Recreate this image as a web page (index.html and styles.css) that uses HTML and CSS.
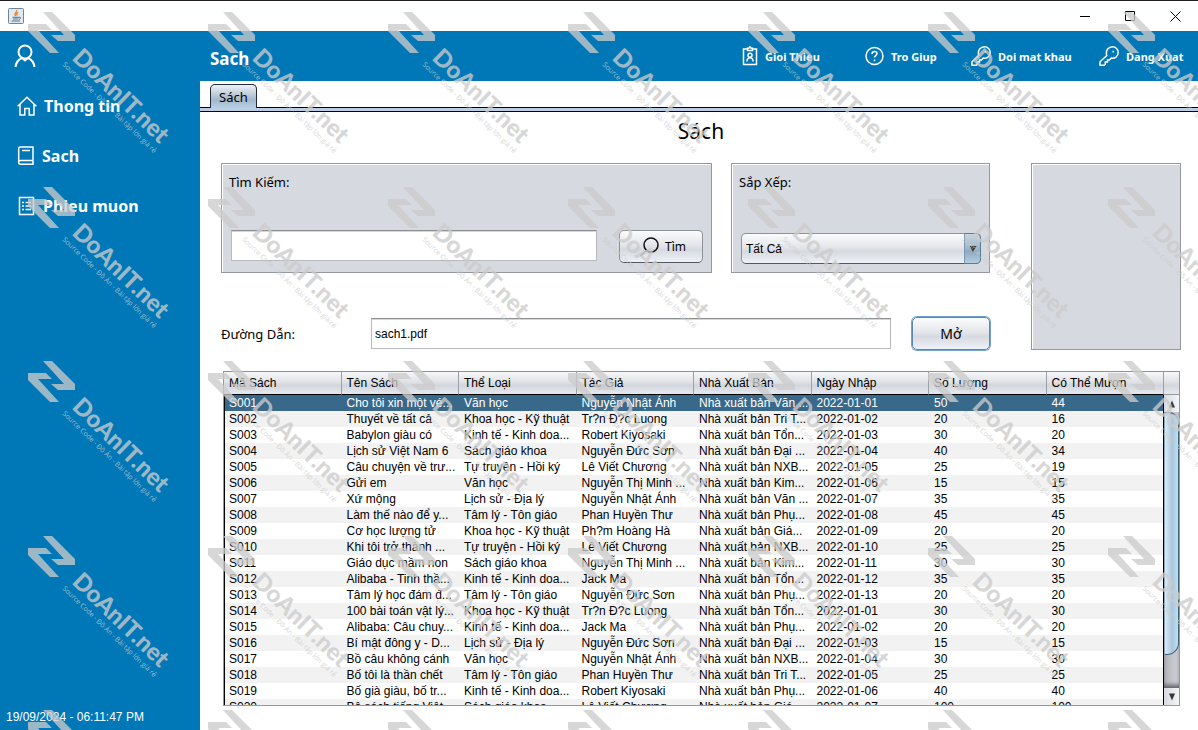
FILE: index.html
```html
<!DOCTYPE html>
<html lang="vi">
<head>
<meta charset="utf-8">
<title>Sach</title>
<link rel="stylesheet" href="styles.css">
</head>
<body>
<div class="window">
  <header class="titlebar">
    <svg class="app-icon" width="16" height="16" viewBox="0 0 16 16" aria-hidden="true">
      <rect x="0.5" y="0.5" width="15" height="15" rx="1" fill="#e3eaef" stroke="#6f8494"/>
      <path d="M8.6 2c1.4 1.7-3.4 3-.9 6.200M10.300 4.300c-2 1-2.200 2-.8 3.200" fill="none" stroke="#e8842a" stroke-width="1.300"/>
      <path d="M4.500 9.300h6.500M5 11h5.500M3.500 13h8.500M11 9.300c2.200-.6 2.200 1.500 0 2" fill="none" stroke="#4c7392"/>
    </svg>
    <div class="window-buttons">
      <button type="button" aria-label="Minimize"><svg width="11" height="11" viewBox="0 0 11 11"><path d="M0 5.500h10"/></svg></button>
      <button type="button" aria-label="Maximize"><svg width="11" height="11" viewBox="0 0 11 11"><path d="M.5.5h9v9h-9z"/></svg></button>
      <button type="button" aria-label="Close"><svg width="11" height="11" viewBox="0 0 11 11"><path d="M.5.5l10 10M10.500.5l-10 10"/></svg></button>
    </div>
  </header>
  <div class="body">
    <aside class="sidebar">
      <div class="user">
        <svg width="22" height="24" viewBox="0 0 22 24" aria-hidden="true"><circle cx="11" cy="8" r="6.500"/><path d="M1.500 23C2 18.500 4.500 15.500 8 14l3 2.500 3-2.500c3.500 1.500 6 4.500 6.500 9"/></svg>
      </div>
      <nav class="menu">
        <a href="#"><svg width="20" height="20" viewBox="0 0 20 20"><path d="M.7 10.300L10 1.200l9.300 9.100M3 8.500V19h4.800v-6.500h4.400V19H17V8.500"/></svg>Thong tin</a>
        <a href="#"><svg width="18" height="20" viewBox="0 0 18 20"><path d="M16 1H3.500C2.300 1 1.700 1.700 1.700 2.700v13.600c0 1.200.8 1.900 1.800 1.900H16zM1.700 16c0-1 .8-1.500 1.800-1.500H16M5 4.500h8"/></svg>Sach</a>
        <a href="#"><svg width="19" height="20" viewBox="0 0 19 20"><path d="M2.500 1.500h14v17h-14zM5 6.500h2M8.500 6.500H14M5 10h2M8.500 10H14M5 13.500h2M8.500 13.500H14"/></svg>Phieu muon</a>
      </nav>
      <time class="clock">19/09/2024 - 06:11:47 PM</time>
    </aside>
    <main class="main">
      <div class="topbar">
        <h1>Sach</h1>
        <nav class="actions">
          <a href="#"><svg width="16" height="20" viewBox="0 0 16 20"><path d="M5 3H1.500v15.500h13V3H11M5.500 4.500V2.200h1.300L8 .8l1.200 1.400h1.300v2.300z"/><circle cx="8" cy="9.200" r="2"/><path d="M5 15.500c0-5 6-5 6 0"/></svg>Gioi Thieu</a>
          <a href="#"><svg width="19" height="20" viewBox="0 0 19 20"><circle cx="9.500" cy="10" r="8.500"/><path d="M7 8c0-3.500 5-3.300 5-.4 0 2-2.500 2-2.500 4M9.500 13.500v1.700"/></svg>Tro Giup</a>
          <a href="#"><svg width="20" height="20" viewBox="0 0 20 20"><path d="M7.800 9.500C6 4 10 .8 13.500.8c3.300 0 5.700 2.500 5.700 5.600 0 4-3.500 6.500-7 5.600l-1.700 2H8.500v2H6.300v2.300L5 19.300H1v-3.500z"/><path d="M14.200 4.800v1.800"/></svg>Doi mat khau</a>
          <a href="#"><svg width="20" height="20" viewBox="0 0 20 20"><path d="M7.800 9.500C6 4 10 .8 13.500.8c3.300 0 5.700 2.500 5.700 5.600 0 4-3.500 6.500-7 5.600l-1.700 2H8.500v2H6.300v2.300L5 19.300H1v-3.500z"/><path d="M14.200 4.800v1.800"/></svg>Dang Xuat</a>
        </nav>
      </div>
      <div class="tabs"><button type="button" class="tab">Sách</button></div>
      <section class="content">
        <h2>Sách</h2>
        <div class="tools">
          <div class="forms">
            <div class="panels">
              <form class="panel search">
                <label for="q">Tìm Kiếm:</label>
                <div class="line">
                  <input id="q" class="field" type="text">
                  <button type="button" class="btn find"><svg width="20" height="20" viewBox="0 0 20 20" aria-hidden="true"><circle cx="12" cy="8" r="7"/><path class="handle" d="M7.300 13.500L1.500 19"/></svg>Tìm</button>
                </div>
              </form>
              <div class="panel sort">
                <label for="sort">Sắp Xếp:</label>
                <div class="combo">
                  <select id="sort"><option>Tất Cả</option></select>
                  <span class="combo-arrow"><svg width="8" height="6" viewBox="0 0 8 6"><path d="M.5 0h7L4 6z"/></svg></span>
                </div>
              </div>
            </div>
            <div class="path">
              <label for="path">Đường Dẫn:</label>
              <input id="path" class="field" type="text" value="sach1.pdf">
              <button type="button" class="btn open">Mở</button>
            </div>
          </div>
          <div class="panel cover"></div>
        </div>
        <div class="grid">
          <div class="grid-view">
            <table>
              <thead><tr><th>Mã Sách</th><th>Tên Sách</th><th>Thể Loại</th><th>Tác Giả</th><th>Nhà Xuất Bản</th><th>Ngày Nhập</th><th>Số Lượng</th><th>Có Thể Mượn</th></tr></thead>
              <tbody>
                <tr class="selected"><td>S001</td><td>Cho tôi xin một vé...</td><td>Văn học</td><td>Nguyễn Nhật Ánh</td><td>Nhà xuất bản Văn ...</td><td>2022-01-01</td><td>50</td><td>44</td></tr>
                <tr><td>S002</td><td>Thuyết về tất cả</td><td>Khoa học - Kỹ thuật</td><td>Tr?n Đ?c Luong</td><td>Nhà xuất bản Tri T...</td><td>2022-01-02</td><td>20</td><td>16</td></tr>
                <tr><td>S003</td><td>Babylon giàu có</td><td>Kinh tế - Kinh doa...</td><td>Robert Kiyosaki</td><td>Nhà xuất bản Tổn...</td><td>2022-01-03</td><td>30</td><td>20</td></tr>
                <tr><td>S004</td><td>Lịch sử Việt Nam 6</td><td>Sách giáo khoa</td><td>Nguyễn Đức Sơn</td><td>Nhà xuất bản Đại ...</td><td>2022-01-04</td><td>40</td><td>34</td></tr>
                <tr><td>S005</td><td>Câu chuyện về trư...</td><td>Tự truyện - Hồi ký</td><td>Lê Viết Chương</td><td>Nhà xuất bản NXB...</td><td>2022-01-05</td><td>25</td><td>19</td></tr>
                <tr><td>S006</td><td>Gửi em</td><td>Văn học</td><td>Nguyễn Thị Minh ...</td><td>Nhà xuất bản Kim...</td><td>2022-01-06</td><td>15</td><td>15</td></tr>
                <tr><td>S007</td><td>Xứ mộng</td><td>Lịch sử - Địa lý</td><td>Nguyễn Nhật Ánh</td><td>Nhà xuất bản Văn ...</td><td>2022-01-07</td><td>35</td><td>35</td></tr>
                <tr><td>S008</td><td>Làm thế nào để y...</td><td>Tâm lý - Tôn giáo</td><td>Phan Huyền Thư</td><td>Nhà xuất bản Phụ...</td><td>2022-01-08</td><td>45</td><td>45</td></tr>
                <tr><td>S009</td><td>Cơ học lượng tử</td><td>Khoa học - Kỹ thuật</td><td>Ph?m Hoàng Hà</td><td>Nhà xuất bản Giá...</td><td>2022-01-09</td><td>20</td><td>20</td></tr>
                <tr><td>S010</td><td>Khi tôi trở thành ...</td><td>Tự truyện - Hồi ký</td><td>Lê Viết Chương</td><td>Nhà xuất bản NXB...</td><td>2022-01-10</td><td>25</td><td>25</td></tr>
                <tr><td>S011</td><td>Giáo dục mầm non</td><td>Sách giáo khoa</td><td>Nguyễn Thị Minh ...</td><td>Nhà xuất bản Kim...</td><td>2022-01-11</td><td>30</td><td>30</td></tr>
                <tr><td>S012</td><td>Alibaba - Tinh thầ...</td><td>Kinh tế - Kinh doa...</td><td>Jack Ma</td><td>Nhà xuất bản Tổn...</td><td>2022-01-12</td><td>35</td><td>35</td></tr>
                <tr><td>S013</td><td>Tâm lý học đám đ...</td><td>Tâm lý - Tôn giáo</td><td>Nguyễn Đức Sơn</td><td>Nhà xuất bản Phụ...</td><td>2022-01-13</td><td>20</td><td>20</td></tr>
                <tr><td>S014</td><td>100 bài toán vật lý...</td><td>Khoa học - Kỹ thuật</td><td>Tr?n Đ?c Luong</td><td>Nhà xuất bản Tổn...</td><td>2022-01-01</td><td>30</td><td>30</td></tr>
                <tr><td>S015</td><td>Alibaba: Câu chuy...</td><td>Kinh tế - Kinh doa...</td><td>Jack Ma</td><td>Nhà xuất bản Phụ...</td><td>2022-01-02</td><td>20</td><td>20</td></tr>
                <tr><td>S016</td><td>Bí mật đông y - D...</td><td>Lịch sử - Địa lý</td><td>Nguyễn Đức Sơn</td><td>Nhà xuất bản Đại ...</td><td>2022-01-03</td><td>15</td><td>15</td></tr>
                <tr><td>S017</td><td>Bồ câu không cánh</td><td>Văn học</td><td>Nguyễn Nhật Ánh</td><td>Nhà xuất bản NXB...</td><td>2022-01-04</td><td>30</td><td>30</td></tr>
                <tr><td>S018</td><td>Bố tôi là thần chết</td><td>Tâm lý - Tôn giáo</td><td>Phan Huyền Thư</td><td>Nhà xuất bản Tri T...</td><td>2022-01-05</td><td>25</td><td>25</td></tr>
                <tr><td>S019</td><td>Bố già giàu, bố tr...</td><td>Kinh tế - Kinh doa...</td><td>Robert Kiyosaki</td><td>Nhà xuất bản Phụ...</td><td>2022-01-06</td><td>40</td><td>40</td></tr>
                <tr><td>S020</td><td>Bộ sách tiếng Việt</td><td>Sách giáo khoa</td><td>Lê Viết Chương</td><td>Nhà xuất bản Giá...</td><td>2022-01-07</td><td>100</td><td>100</td></tr>
              </tbody>
            </table>
          </div>
          <div class="scroll">
            <div class="corner"></div>
            <button type="button" class="arrow" aria-label="Scroll up"><svg width="8" height="8" viewBox="0 0 8 8"><path d="M4 .5L7 7.500H1z"/></svg></button>
            <div class="track"><div class="thumb"></div></div>
            <button type="button" class="arrow" aria-label="Scroll down"><svg width="8" height="8" viewBox="0 0 8 8"><path d="M1 .5h6L4 7.500z"/></svg></button>
          </div>
        </div>
      </section>
    </main>
  </div>
  <div class="watermark" id="watermark" aria-hidden="true"></div>
</div>
<template id="mark">
  <svg width="180" height="174" viewBox="0 0 180 174">
    <path d="M43 12h9l23 23v6H58l-7-6h13zM28 24h18l6 6H38l21 23h-9L28 31z"/>
    <text class="mark-name" transform="translate(71 59) rotate(44)">DoAnIT.net</text>
    <text class="mark-line" transform="translate(62 65) rotate(44)">Source Code - Đồ Án - Bài tập lớn giá rẻ</text>
  </svg>
</template>
<script src="app.js"></script>
</body>
</html>
```
FILE: app.js
```js
const layer = document.getElementById('watermark');
const mark = document.getElementById('mark');

function fillWatermark() {
  const columns = Math.ceil(window.innerWidth / 180);
  const rows = Math.ceil(window.innerHeight / 174);
  layer.replaceChildren();
  for (let i = 0; i < columns * rows; i++) {
    layer.append(mark.content.cloneNode(true));
  }
}

fillWatermark();
window.addEventListener('resize', fillWatermark);
```
FILE: styles.css
```css
* { box-sizing: border-box; }
body { margin: 0; font-family: "Liberation Sans", Arial, sans-serif; font-size: 12px; color: #000; }
button, input, select { font: inherit; color: inherit; margin: 0; }
a { color: inherit; text-decoration: none; }
svg { flex: none; }

.window { position: relative; display: flex; flex-direction: column; height: 100vh; overflow: hidden; background: #fff; }

.titlebar { display: flex; align-items: center; justify-content: space-between; height: 31px; padding-left: 8px; border-top: 1px solid #231f20; }
.window-buttons { display: flex; }
.window-buttons button { display: flex; align-items: center; justify-content: center; width: 45px; height: 28px; padding: 0; border: 0; background: none; }
.window-buttons path { fill: none; stroke: #000; }

.body { display: flex; flex: 1; min-height: 0; }

.sidebar { display: flex; flex-direction: column; width: 200px; background: #0078b8; color: #fff; }
.sidebar svg, .actions svg { fill: none; stroke: #fff; stroke-width: 1.5; }
.user { display: flex; align-items: center; height: 50px; padding-left: 14px; }
.user svg { stroke-width: 2; }
.menu { flex: 1; font: bold 16px "Noto Sans", Tahoma, sans-serif; }
.menu a { display: flex; align-items: center; gap: 7px; height: 50px; padding-left: 17px; }
.clock { padding: 0 6px 6px; line-height: 14px; }

.main { display: flex; flex: 1; flex-direction: column; min-width: 0; }
.topbar { display: flex; align-items: center; justify-content: space-between; height: 50px; padding: 0 15px 0 10px; background: #0078b8; color: #fff; }
.topbar h1 { margin: 0; padding-top: 4px; font: bold 17px "Noto Sans", Tahoma, sans-serif; }
.actions { display: grid; grid-template-columns: 123px 106px 128px 84px; font: bold 11px "Noto Sans", Tahoma, sans-serif; white-space: nowrap; }
.actions a { display: flex; align-items: center; gap: 7px; }

.tabs { height: 31px; padding: 3px 10px 0; background: linear-gradient(#fff 26px, #000 26px, #000 27px, #b8cfe5 27px, #b8cfe5 30px, #000 30px); }
.tab { height: 24px; padding: 0 8px; border: 1px solid #1f2a3c; border-bottom: 0; border-radius: 5px 5px 0 0; background: linear-gradient(#eef2f6, #b4c4d3 50%, #a3b8cc 65%, #b8cfe5); font: 13px "Noto Sans", Tahoma, sans-serif; line-height: 20px; }

.content { display: flex; flex: 1; flex-direction: column; min-height: 0; padding: 0 17px 24px 21px; }
.content h2 { margin: 0; height: 51px; font: 21px "Noto Sans", Tahoma, sans-serif; line-height: 38px; text-align: center; }
.tools { display: flex; gap: 41px; }
.forms { display: flex; flex: 1; flex-direction: column; justify-content: space-between; }
.panels { display: flex; gap: 19px; }
.panel { height: 110px; padding: 8px; border: 1px solid #95989e; background: #d6d9df; box-shadow: inset 1px 1px #fff; }
.panel > label, .path label { font: 13px "Noto Sans", Tahoma, sans-serif; line-height: 20px; }
.panel > label { display: block; margin-left: -1px; }
.search { flex: 1; }
.sort { width: 259px; }
.line { display: flex; gap: 22px; padding-top: 38px; padding-left: 1px; }
.field { flex: 1; min-width: 0; height: 31px; padding: 0 3px; border: 1px solid #b8babf; border-top-color: #8d8e8f; background: #fff; box-shadow: inset 0 1px #d5d6d8; outline: 0; }
.btn { display: flex; align-items: center; justify-content: center; height: 33px; border: 1px solid #8d9198; border-bottom-color: #53585f; border-radius: 5px; background: linear-gradient(#fafbfc, #e4e6ea 45%, #d6d9df 60%, #eff1f8); font: 12px "Noto Sans", Tahoma, sans-serif; }
.find { width: 84px; gap: 6px; padding: 0 0 0 3px; }
.find svg { fill: none; stroke: #111; stroke-width: 1.5; }
.find .handle { stroke: #777; }
.combo { display: grid; width: 241px; padding: 41px 0 0 1px; }
.combo select { grid-area: 1 / 1; height: 31px; padding: 0 4px; border: 1px solid #8d9198; border-bottom-color: #53585f; border-radius: 5px; appearance: none; background: linear-gradient(#fafbfc, #e4e6ea 45%, #d6d9df 60%, #eff1f8); }
.combo-arrow { grid-area: 1 / 1; display: flex; align-items: center; justify-content: center; justify-self: end; width: 17px; border: 1px solid #5c7d99; border-radius: 0 5px 5px 0; border-left-color: #7d99b0; background: linear-gradient(#c8d7e2, #9fb6c8 50%, #8faac0 60%, #b3cee3); pointer-events: none; }
.combo-arrow path { fill: #33383d; }
.path { display: flex; align-items: center; }
.path label { width: 150px; }
.open { width: 78px; margin-left: 21px; border-color: #5c87b0; box-shadow: 0 0 0 1px #73a4d1; font-size: 14px; }
.cover { width: 150px; height: 187px; }

.grid { display: flex; flex: 1; min-height: 0; margin: 21px 1px 0 2px; border: 1px solid #95989e; border-top-color: #8e9197; }
.grid-view { flex: 1; min-width: 0; overflow: hidden; }
.grid table { width: 100%; table-layout: fixed; border-collapse: separate; border-spacing: 0; }
.grid th, .grid td { overflow: hidden; white-space: nowrap; text-align: left; }
.grid th, .corner { height: 23px; border-bottom: 1px solid #000; background: linear-gradient(#f6f7f9, #e0e2e7 45%, #d3d6dc 60%, #e6e8ef); }
.grid th { padding: 0 5px; border-right: 1px solid #9da0a6; font-weight: normal; }
.grid td { height: 16px; padding: 0 0 0 5px; line-height: 16px; }
.grid td:first-child { padding-left: 4px; border-left: 1px solid #000; }
.grid td:last-child { border-right: 1px solid #000; }
.grid tr:nth-child(even) td { background: #f2f2f2; }
.grid tr.selected td { background: #39698a; color: #fff; }

.scroll { display: flex; flex-direction: column; width: 15px; }
.corner { border-bottom-color: #95989e; }
.arrow { display: flex; align-items: center; justify-content: center; height: 17px; padding: 0; border: 0; background: linear-gradient(90deg, #d9dbe0, #f4f5f7); }
.arrow path { fill: #33383d; }
.track { flex: 1; background: linear-gradient(90deg, #b3b5bb, #d0d2d8); box-shadow: inset 0 -4px 4px -1px #606268; }
.thumb { height: 88%; border: 1px solid #3d6079; border-left-color: #8aa5b8; border-radius: 2px 10px 12px 2px; background: linear-gradient(90deg, #dcebf5, #a9c6dc 55%, #bfe0f4); }

.watermark { position: absolute; inset: 0; display: grid; grid-template-columns: repeat(7, 180px); grid-template-rows: repeat(auto-fill, 175px 174px); grid-auto-rows: 175px; overflow: hidden; pointer-events: none; opacity: .77; }
.watermark svg { fill: #ccc; }
.mark-name { font: 900 24px Lato, sans-serif; }
.mark-line { font: 7px "Open Sans", sans-serif; }
```
